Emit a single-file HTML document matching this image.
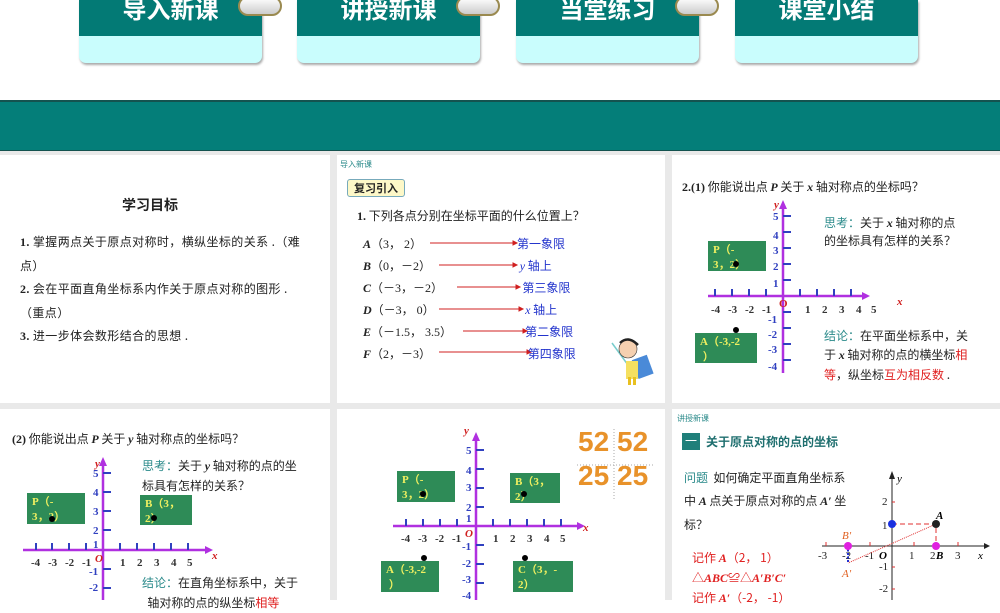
<!DOCTYPE html>
<html><head><meta charset="utf-8">
<style>
*{margin:0;padding:0;box-sizing:border-box}
body{width:1000px;height:600px;overflow:hidden;background:#fff;position:relative;font-family:"Liberation Serif","Noto Sans CJK SC",serif;color:#222}
.a{position:absolute;white-space:nowrap}
.btn{position:absolute;top:0;width:183px;height:63px;background:#c9fdfd;border-radius:0 0 7px 7px;box-shadow:1px 2px 2px #aaa;overflow:hidden}
.btn div{height:36px;background:#037a75;color:#fff;font:bold 24px "Noto Sans CJK SC",sans-serif;text-align:center;line-height:16px;letter-spacing:0px}
.ring{position:absolute;top:-4px;width:44px;height:20px;border-radius:10px;background:linear-gradient(#fff,#ccc);border:2px solid #9a8a50}
.panel{position:absolute;background:#fff}
.cj{font-family:"Noto Sans CJK SC",sans-serif}
.gb{position:absolute;background:#2e8b57;color:#f0f060;font:bold 11px "Liberation Serif","Noto Sans CJK SC",serif;line-height:15px;padding:2px 5px;white-space:normal}
.dot{position:absolute;width:6px;height:6px;border-radius:3px;background:#000}
.bl{color:#2233cc}
.rd{color:#e02020}
.tl{color:#2a8a8a}
</style></head><body>
<div class="btn" style="left:79px"><div>导入新课</div></div>
<div class="btn" style="left:297px"><div>讲授新课</div></div>
<div class="btn" style="left:516px"><div>当堂练习</div></div>
<div class="btn" style="left:735px"><div>课堂小结</div></div>
<div class="ring" style="left:238px"></div>
<div class="ring" style="left:456px"></div>
<div class="ring" style="left:675px"></div>

<div class="a" style="left:0;top:100px;width:1000px;height:51px;background:#047e79;border-top:2px solid #14524f;border-bottom:1px solid #14524f"></div>
<div class="a" style="left:0;top:151px;width:1000px;height:449px;background:#e9e9e9"></div>

<div class="panel" style="left:0;top:155px;width:330px;height:248px">
  <div class="a cj" style="left:122px;top:40px;font-size:14px;font-weight:bold">学习目标</div>
  <div class="a cj" style="left:20px;top:75px;font-size:12px;line-height:23px;letter-spacing:0.4px"><b style="font-family:'Liberation Serif'">1.</b> 掌握两点关于原点对称时，横纵坐标的关系 .（难<br>点）<br><b style="font-family:'Liberation Serif'">2.</b> 会在平面直角坐标系内作关于原点对称的图形 .<br>（重点）<br><b style="font-family:'Liberation Serif'">3.</b> 进一步体会数形结合的思想 .</div>
</div>

<div class="panel" style="left:337px;top:155px;width:328px;height:248px">
  <div class="a cj tl" style="left:3px;top:4px;font-size:8px">导入新课</div>
  <div class="a cj" style="left:10px;top:24px;width:58px;height:18px;background:#fdf8c8;border:1px solid #7ab;border-radius:3px;font-size:11px;font-weight:bold;text-align:center;line-height:16px">复习引入</div>
  <div class="a cj" style="left:20px;top:52px;font-size:12px"><b style="font-family:'Liberation Serif'">1.</b> 下列各点分别在坐标平面的什么位置上？</div>
  <div class="a" style="left:26px;top:78px;font-size:12px;line-height:22px"><i><b>A</b></i>（3， 2）<br><i><b>B</b></i>（0，－2）<br><i><b>C</b></i>（－3，－2）<br><i><b>D</b></i>（－3， 0）<br><i><b>E</b></i>（－1.5， 3.5）<br><i><b>F</b></i>（2，－3）</div>
  <svg class="a" style="left:0;top:0" width="328" height="248">
    <g stroke="#d02020" stroke-width="1" fill="#d02020">
      <line x1="93" y1="88" x2="176" y2="88"/><path d="M176 86L180 88L176 90Z"/>
      <line x1="102" y1="110" x2="176" y2="110"/><path d="M176 108L180 110L176 112Z"/>
      <line x1="120" y1="132" x2="179" y2="132"/><path d="M179 130L183 132L179 134Z"/>
      <line x1="102" y1="154" x2="182" y2="154"/><path d="M182 152L186 154L182 156Z"/>
      <line x1="126" y1="176" x2="186" y2="176"/><path d="M186 174L190 176L186 178Z"/>
      <line x1="102" y1="197" x2="190" y2="197"/><path d="M190 195L194 197L190 199Z"/>
    </g>
    <g transform="translate(275,180)">
      <line x1="0" y1="8" x2="16" y2="30" stroke="#7cc" stroke-width="1.5"/>
      <rect x="22" y="22" width="16" height="20" fill="#4a8ad8" transform="rotate(-20 30 30)"/>
      <rect x="14" y="26" width="12" height="18" fill="#f5e060"/>
      <rect x="16" y="42" width="3" height="8" fill="#e8c020"/><rect x="21" y="42" width="3" height="8" fill="#e8c020"/>
      <circle cx="16" cy="14" r="9" fill="#f5d0b0" stroke="#333" stroke-width="0.6"/>
      <path d="M8 8Q16 0 26 10" stroke="#222" stroke-width="2.5" fill="none"/>
    </g>
  </svg>
  <div class="a cj bl" style="left:180px;top:78px;font-size:12px;line-height:22px">第一象限<br>&nbsp;<i style="font-family:'Liberation Serif'">y</i> 轴上<br>&nbsp;&nbsp;第三象限<br>&nbsp;&nbsp;&nbsp;<i style="font-family:'Liberation Serif'">x</i> 轴上<br>&nbsp;&nbsp;&nbsp;第二象限<br>&nbsp;&nbsp;&nbsp;&nbsp;第四象限</div>
</div>

<div class="panel" style="left:672px;top:155px;width:328px;height:248px">
  <div class="a cj" style="left:10px;top:23px;font-size:12px"><b style="font-family:'Liberation Serif'">2.(1)</b> 你能说出点 <i><b style="font-family:'Liberation Serif'">P</b></i> 关于 <i style="font-family:'Liberation Serif'"><b>x</b></i> 轴对称点的坐标吗？</div>
  <svg class="a" style="left:0;top:0;font-family:'Liberation Serif';font-size:11px;font-weight:bold" width="328" height="248">
    <g stroke="#b030e0" stroke-width="2.5"><line x1="36" y1="141" x2="190" y2="141"/><line x1="111" y1="52" x2="111" y2="218"/></g>
    <path d="M190 137L198 141L190 145Z M107 54L111 45L115 54Z" fill="#b030e0"/>
    <g stroke="#3040c0" stroke-width="2">
      <path d="M43 134v7M60 134v7M77 134v7M94 134v7M128 134v7M145 134v7M162 134v7M179 134v7"/>
      <path d="M111 61h8M111 77h8M111 93h8M111 109h8M111 125h8M111 157h8M111 173h8M111 189h8M111 205h8"/>
    </g>
    <g fill="#333"><text x="39" y="158">-4</text><text x="56" y="158">-3</text><text x="73" y="158">-2</text><text x="90" y="158">-1</text><text x="133" y="158">1</text><text x="150" y="158">2</text><text x="167" y="158">3</text><text x="184" y="158">4</text><text x="199" y="158">5</text></g>
    <g fill="#3040c0"><text x="101" y="65">5</text><text x="101" y="84">4</text><text x="101" y="99">3</text><text x="101" y="115">2</text><text x="101" y="132">1</text><text x="96" y="168">-1</text><text x="96" y="183">-2</text><text x="96" y="198">-3</text><text x="96" y="215">-4</text></g>
    <text x="107" y="152" fill="#d02020">O</text><text x="225" y="150" fill="#d02020" font-style="italic">x</text><text x="102" y="53" fill="#d02020" font-style="italic">y</text>
  </svg>
  <div class="gb" style="left:36px;top:86px;width:58px;height:30px">P（-<br>3，2）</div>
  <div class="dot" style="left:61px;top:106px"></div>
  <div class="dot" style="left:61px;top:172px"></div>
  <div class="gb" style="left:23px;top:178px;width:62px;height:30px">A（-3,-2<br>&nbsp;）</div>
  <div class="a cj" style="left:152px;top:59px;font-size:12px;line-height:18px"><span class="tl">思考：</span>关于 <i style="font-family:'Liberation Serif'"><b>x</b></i> 轴对称的点<br>的坐标具有怎样的关系？</div>
  <div class="a cj" style="left:152px;top:171px;font-size:12px;line-height:19px"><span class="tl">结论：</span>在平面坐标系中，关<br>于 <i style="font-family:'Liberation Serif'"><b>x</b></i> 轴对称的点的横坐标<span class="rd">相</span><br><span class="rd">等</span>，纵坐标<span class="rd">互为相反数</span> .</div>
</div>

<div class="panel" style="left:0;top:409px;width:330px;height:191px">
  <div class="a cj" style="left:12px;top:21px;font-size:12px"><b style="font-family:'Liberation Serif'">(2)</b> 你能说出点 <i><b style="font-family:'Liberation Serif'">P</b></i> 关于 <i style="font-family:'Liberation Serif'"><b>y</b></i> 轴对称点的坐标吗？</div>
  <svg class="a" style="left:0;top:0;font-family:'Liberation Serif';font-size:11px;font-weight:bold" width="330" height="191">
    <g stroke="#b030e0" stroke-width="2.5"><line x1="23" y1="141" x2="205" y2="141"/><line x1="103" y1="55" x2="103" y2="191"/></g>
    <path d="M205 137L213 141L205 145Z M99 57L103 48L107 57Z" fill="#b030e0"/>
    <g stroke="#3040c0" stroke-width="2">
      <path d="M36 134v7M52 134v7M69 134v7M86 134v7M120 134v7M137 134v7M154 134v7M171 134v7M188 134v7"/>
      <path d="M103 64h8M103 83h8M103 102h8M103 121h8M103 160h8M103 179h8"/>
    </g>
    <g fill="#333"><text x="31" y="157">-4</text><text x="48" y="157">-3</text><text x="65" y="157">-2</text><text x="82" y="157">-1</text><text x="120" y="157">1</text><text x="137" y="157">2</text><text x="154" y="157">3</text><text x="171" y="157">4</text><text x="187" y="157">5</text></g>
    <g fill="#3040c0"><text x="93" y="68">5</text><text x="93" y="87">4</text><text x="93" y="106">3</text><text x="93" y="125">2</text><text x="93" y="139">1</text><text x="89" y="166">-1</text><text x="89" y="182">-2</text></g>
    <text x="95" y="153" fill="#d02020" font-style="italic">O</text><text x="212" y="150" fill="#d02020" font-style="italic">x</text><text x="95" y="58" fill="#d02020" font-style="italic">y</text>
  </svg>
  <div class="gb" style="left:27px;top:84px;width:58px;height:31px">P（-<br>3，2）</div>
  <div class="dot" style="left:49px;top:107px"></div>
  <div class="gb" style="left:140px;top:86px;width:52px;height:30px">B（3，<br>2）</div>
  <div class="dot" style="left:151px;top:106px"></div>
  <div class="a cj" style="left:142px;top:47px;font-size:12px;line-height:20px"><span class="tl">思考：</span>关于 <i style="font-family:'Liberation Serif'"><b>y</b></i> 轴对称的点的坐<br>标具有怎样的关系？</div>
  <div class="a cj" style="left:142px;top:164px;font-size:12px;line-height:20px"><span class="tl">结论：</span>在直角坐标系中，关于<br>&nbsp;&nbsp;轴对称的点的纵坐标<span class="rd">相等</span></div>
</div>

<div class="panel" style="left:337px;top:409px;width:328px;height:191px">
  <svg class="a" style="left:0;top:0;font-family:'Liberation Serif';font-size:11px;font-weight:bold" width="328" height="191">
    <g stroke="#b030e0" stroke-width="2.5"><line x1="56" y1="117" x2="240" y2="117"/><line x1="139" y1="30" x2="139" y2="191"/></g>
    <path d="M240 113L248 117L240 121Z M135 32L139 23L143 32Z" fill="#b030e0"/>
    <g stroke="#3040c0" stroke-width="2">
      <path d="M69 110v7M86 110v7M103 110v7M120 110v7M156 110v7M173 110v7M190 110v7M207 110v7M224 110v7"/>
      <path d="M139 41h8M139 60h8M139 79h8M139 98h8M139 136h8M139 155h8M139 174h8"/>
    </g>
    <g fill="#333"><text x="64" y="133">-4</text><text x="81" y="133">-3</text><text x="98" y="133">-2</text><text x="115" y="133">-1</text><text x="156" y="133">1</text><text x="173" y="133">2</text><text x="190" y="133">3</text><text x="207" y="133">4</text><text x="223" y="133">5</text></g>
    <g fill="#3040c0"><text x="129" y="45">5</text><text x="129" y="65">4</text><text x="129" y="82">3</text><text x="129" y="102">2</text><text x="129" y="113">1</text><text x="125" y="141">-1</text><text x="125" y="158">-2</text><text x="125" y="174">-3</text><text x="125" y="190">-4</text></g>
    <text x="128" y="128" fill="#d02020" font-style="italic">O</text><text x="246" y="122" fill="#d02020" font-style="italic">x</text><text x="127" y="25" fill="#d02020" font-style="italic">y</text>
    <g font-family="Liberation Sans" font-size="28" fill="#e8922a"><text x="241" y="42">52</text><text x="280" y="42">52</text><text x="241" y="76">25</text><text x="280" y="76">25</text></g>
    <path d="M277 20V92M240 56H318" stroke="#aaa" stroke-dasharray="1 2"/>
  </svg>
  <div class="gb" style="left:60px;top:62px;width:58px;height:31px">P（-<br>3，2）</div>
  <div class="dot" style="left:83px;top:82px"></div>
  <div class="gb" style="left:173px;top:64px;width:50px;height:30px">B（3，<br>2）</div>
  <div class="dot" style="left:184px;top:82px"></div>
  <div class="dot" style="left:84px;top:146px"></div>
  <div class="gb" style="left:44px;top:152px;width:58px;height:31px">A（-3,-2<br>&nbsp;）</div>
  <div class="dot" style="left:185px;top:146px"></div>
  <div class="gb" style="left:176px;top:152px;width:60px;height:31px">C（3，-<br>2）</div>
</div>

<div class="panel" style="left:672px;top:409px;width:328px;height:191px">
  <div class="a cj tl" style="left:5px;top:4px;font-size:8px">讲授新课</div>
  <div class="a cj" style="left:10px;top:24px;width:18px;height:17px;background:#1f7f7a;color:#fff;font-size:12px;text-align:center;line-height:16px">一</div>
  <div class="a cj" style="left:34px;top:24px;font-size:12px;font-weight:bold;color:#1f6f6f">关于原点对称的点的坐标</div>
  <div class="a cj" style="left:12px;top:57px;font-size:12px;line-height:23px"><span class="tl">问题</span>&nbsp; 如何确定平面直角坐标系<br>中 <i style="font-family:'Liberation Serif'"><b>A</b></i> 点关于原点对称的点 <i style="font-family:'Liberation Serif'"><b>A′</b></i> 坐<br>标？</div>
  <div class="a cj rd" style="left:20px;top:139px;font-size:12px;line-height:20px">记作 <i style="font-family:'Liberation Serif'"><b>A</b></i>（2， 1）<br>△<i style="font-family:'Liberation Serif'"><b>ABC</b></i>≌△<i style="font-family:'Liberation Serif'"><b>A′B′C′</b></i><br>记作 <i style="font-family:'Liberation Serif'"><b>A′</b></i>（-2， -1）</div>
  <svg class="a" style="left:0;top:0;font-family:'Liberation Serif';font-size:11px" width="328" height="191">
    <line x1="150" y1="137" x2="312" y2="137" stroke="#222"/><path d="M312 134L318 137L312 140Z" fill="#222"/>
    <line x1="220" y1="66" x2="220" y2="191" stroke="#222"/><path d="M217 70L220 62L223 70Z" fill="#222"/>
    <g stroke="#e03030"><path d="M154 133v4M176 133v4M198 133v4M242 133v4M264 133v4M286 133v4M220 93h3M220 158h3M220 180h3"/></g>
    <g fill="#222"><text x="146" y="150">-3</text><text x="170" y="150">-2</text><text x="193" y="150">-1</text><text x="237" y="150">1</text><text x="258" y="150">2</text><text x="283" y="150">3</text><text x="210" y="96">2</text><text x="210" y="120">1</text><text x="207" y="161">-1</text><text x="207" y="183">-2</text></g>
    <text x="207" y="150" font-style="italic" font-weight="bold">O</text><text x="306" y="150" font-style="italic">x</text><text x="225" y="73" font-style="italic">y</text>
    <text x="264" y="150" font-style="italic" font-weight="bold">B</text><text x="264" y="110" font-style="italic" font-weight="bold">A</text>
    <text x="170" y="130" font-style="italic" fill="#e06020">B′</text><text x="170" y="168" font-style="italic" fill="#e06020">A′</text>
    <path d="M220 115H264V137" stroke="#e03030" stroke-dasharray="5 3" fill="none"/>
    <path d="M264 115L176 154" stroke="#e03030" stroke-dasharray="1 1" fill="none"/>
    <path d="M176 137V154" stroke="#2030d0" stroke-width="2" stroke-dasharray="2 1.5"/>
    <circle cx="220" cy="115" r="4" fill="#1a30e0"/><circle cx="264" cy="115" r="4" fill="#222"/>
    <circle cx="264" cy="137" r="4" fill="#e020e0"/><circle cx="176" cy="137" r="4" fill="#e020e0"/>
  </svg>
</div>
</body></html>
